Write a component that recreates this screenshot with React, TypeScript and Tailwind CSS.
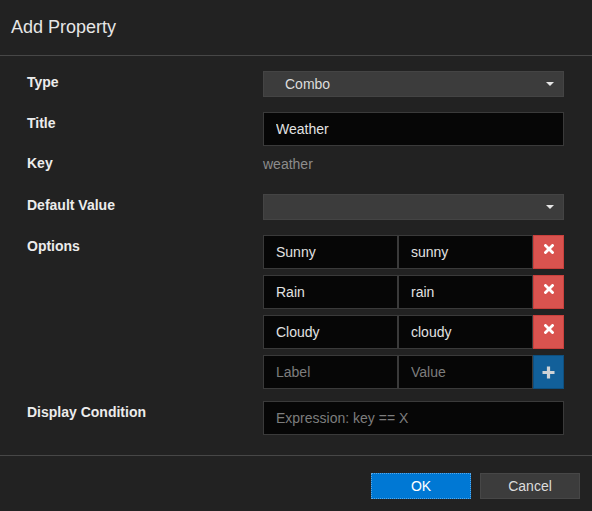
import { useState } from 'react';

type Option = { label: string; value: string };

const font = { fontFamily: '"Liberation Sans", Arial, sans-serif' };

function Caret() {
    return (
        <span className="h-0 w-0 border-x-[4px] border-t-[4px] border-x-transparent border-t-[#e6e6e6]" />
    );
}

function Select({ value }: { value?: string }) {
    return (
        <div className="flex h-[26px] w-full items-center justify-between border border-[#444444] bg-[#3c3c3c] pl-[21px] pr-[9px] text-[14px] text-[#dddddd]">
            <span>{value}</span>
            <Caret />
        </div>
    );
}

function TextInput({ value, placeholder, className = '' }: { value?: string; placeholder?: string; className?: string }) {
    return (
        <input
            defaultValue={value}
            placeholder={placeholder}
            className={`h-[34px] min-w-0 border border-[#3a3a3a] bg-[#060606] pl-[12px] text-[14px] text-[#e2e2e2] outline-none placeholder:text-[#7d7d7d] ${className}`}
            style={font}
        />
    );
}

function Row({ label, className = '', children }: { label: string; className?: string; children: React.ReactNode }) {
    return (
        <div className={`flex ${className}`}>
            <div className="w-[236px] shrink-0 pt-[1px] text-[14px] font-bold leading-[20px] text-[#ececec]">{label}</div>
            <div className="w-[301px]">{children}</div>
        </div>
    );
}

export default function App() {
    const [options] = useState<Option[]>([
        { label: 'Sunny', value: 'sunny' },
        { label: 'Rain', value: 'rain' },
        { label: 'Cloudy', value: 'cloudy' },
    ]);

    return (
        <div className="flex h-[511px] w-[592px] flex-col bg-[#222222]" style={font}>
            <div className="flex h-[56px] items-center border-b border-[#474747] px-[11px] text-[18px] text-[#e6e6e6]">
                Add Property
            </div>

            <div className="flex flex-col pl-[27px] pt-[15px]">
                <Row label="Type">
                    <Select value="Combo" />
                </Row>
                <Row label="Title" className="mt-[15px]">
                    <TextInput value="Weather" className="w-full" />
                </Row>
                <Row label="Key" className="mt-[6px]">
                    <div className="pt-[2px] text-[14px] leading-[20px] text-[#8c8c8c]">weather</div>
                </Row>
                <Row label="Default Value" className="mt-[20px]">
                    <Select />
                </Row>
                <Row label="Options" className="mt-[15px]">
                    <div className="flex flex-col gap-[6px]">
                        {options.map((o) => (
                            <div key={o.value} className="flex">
                                <TextInput value={o.label} className="w-[135px]" />
                                <TextInput value={o.value} className="w-[135px]" />
                                <button className="flex h-[34px] w-[31px] items-start justify-center border border-[#c9403c] bg-[#d9534f] pt-[8px]">
                                    <svg width="10" height="10" viewBox="0 0 10 10">
                                        <path d="M1.5 1.5 L8.5 8.5 M8.5 1.5 L1.5 8.5" stroke="#ffffff" strokeWidth="2.8" strokeLinecap="square" />
                                    </svg>
                                </button>
                            </div>
                        ))}
                        <div className="flex">
                            <TextInput placeholder="Label" className="w-[135px]" />
                            <TextInput placeholder="Value" className="w-[135px]" />
                            <button className="flex h-[34px] w-[31px] items-center justify-center border border-[#0e4f7e] bg-[#12609a]">
                                <svg width="13" height="13" viewBox="0 0 13 13">
                                    <path d="M6.5 0.5 V12.5 M0.5 6.5 H12.5" stroke="#cfd3d6" strokeWidth="3.2" />
                                </svg>
                            </button>
                        </div>
                    </div>
                </Row>
                <Row label="Display Condition" className="mt-[12px]">
                    <TextInput placeholder="Expression: key == X" className="w-full" />
                </Row>
            </div>

            <div className="mt-[20px] flex justify-end gap-[9px] border-t border-[#474747] pr-[12px] pt-[17px]">
                <button className="h-[26px] w-[100px] border border-dotted border-[#5aa8e6] bg-[#0078d4] text-[14px] text-white">
                    OK
                </button>
                <button className="h-[26px] w-[100px] border border-[#474747] bg-[#3c3c3c] text-[14px] text-[#dcdcdc]">
                    Cancel
                </button>
            </div>
        </div>
    );
}
